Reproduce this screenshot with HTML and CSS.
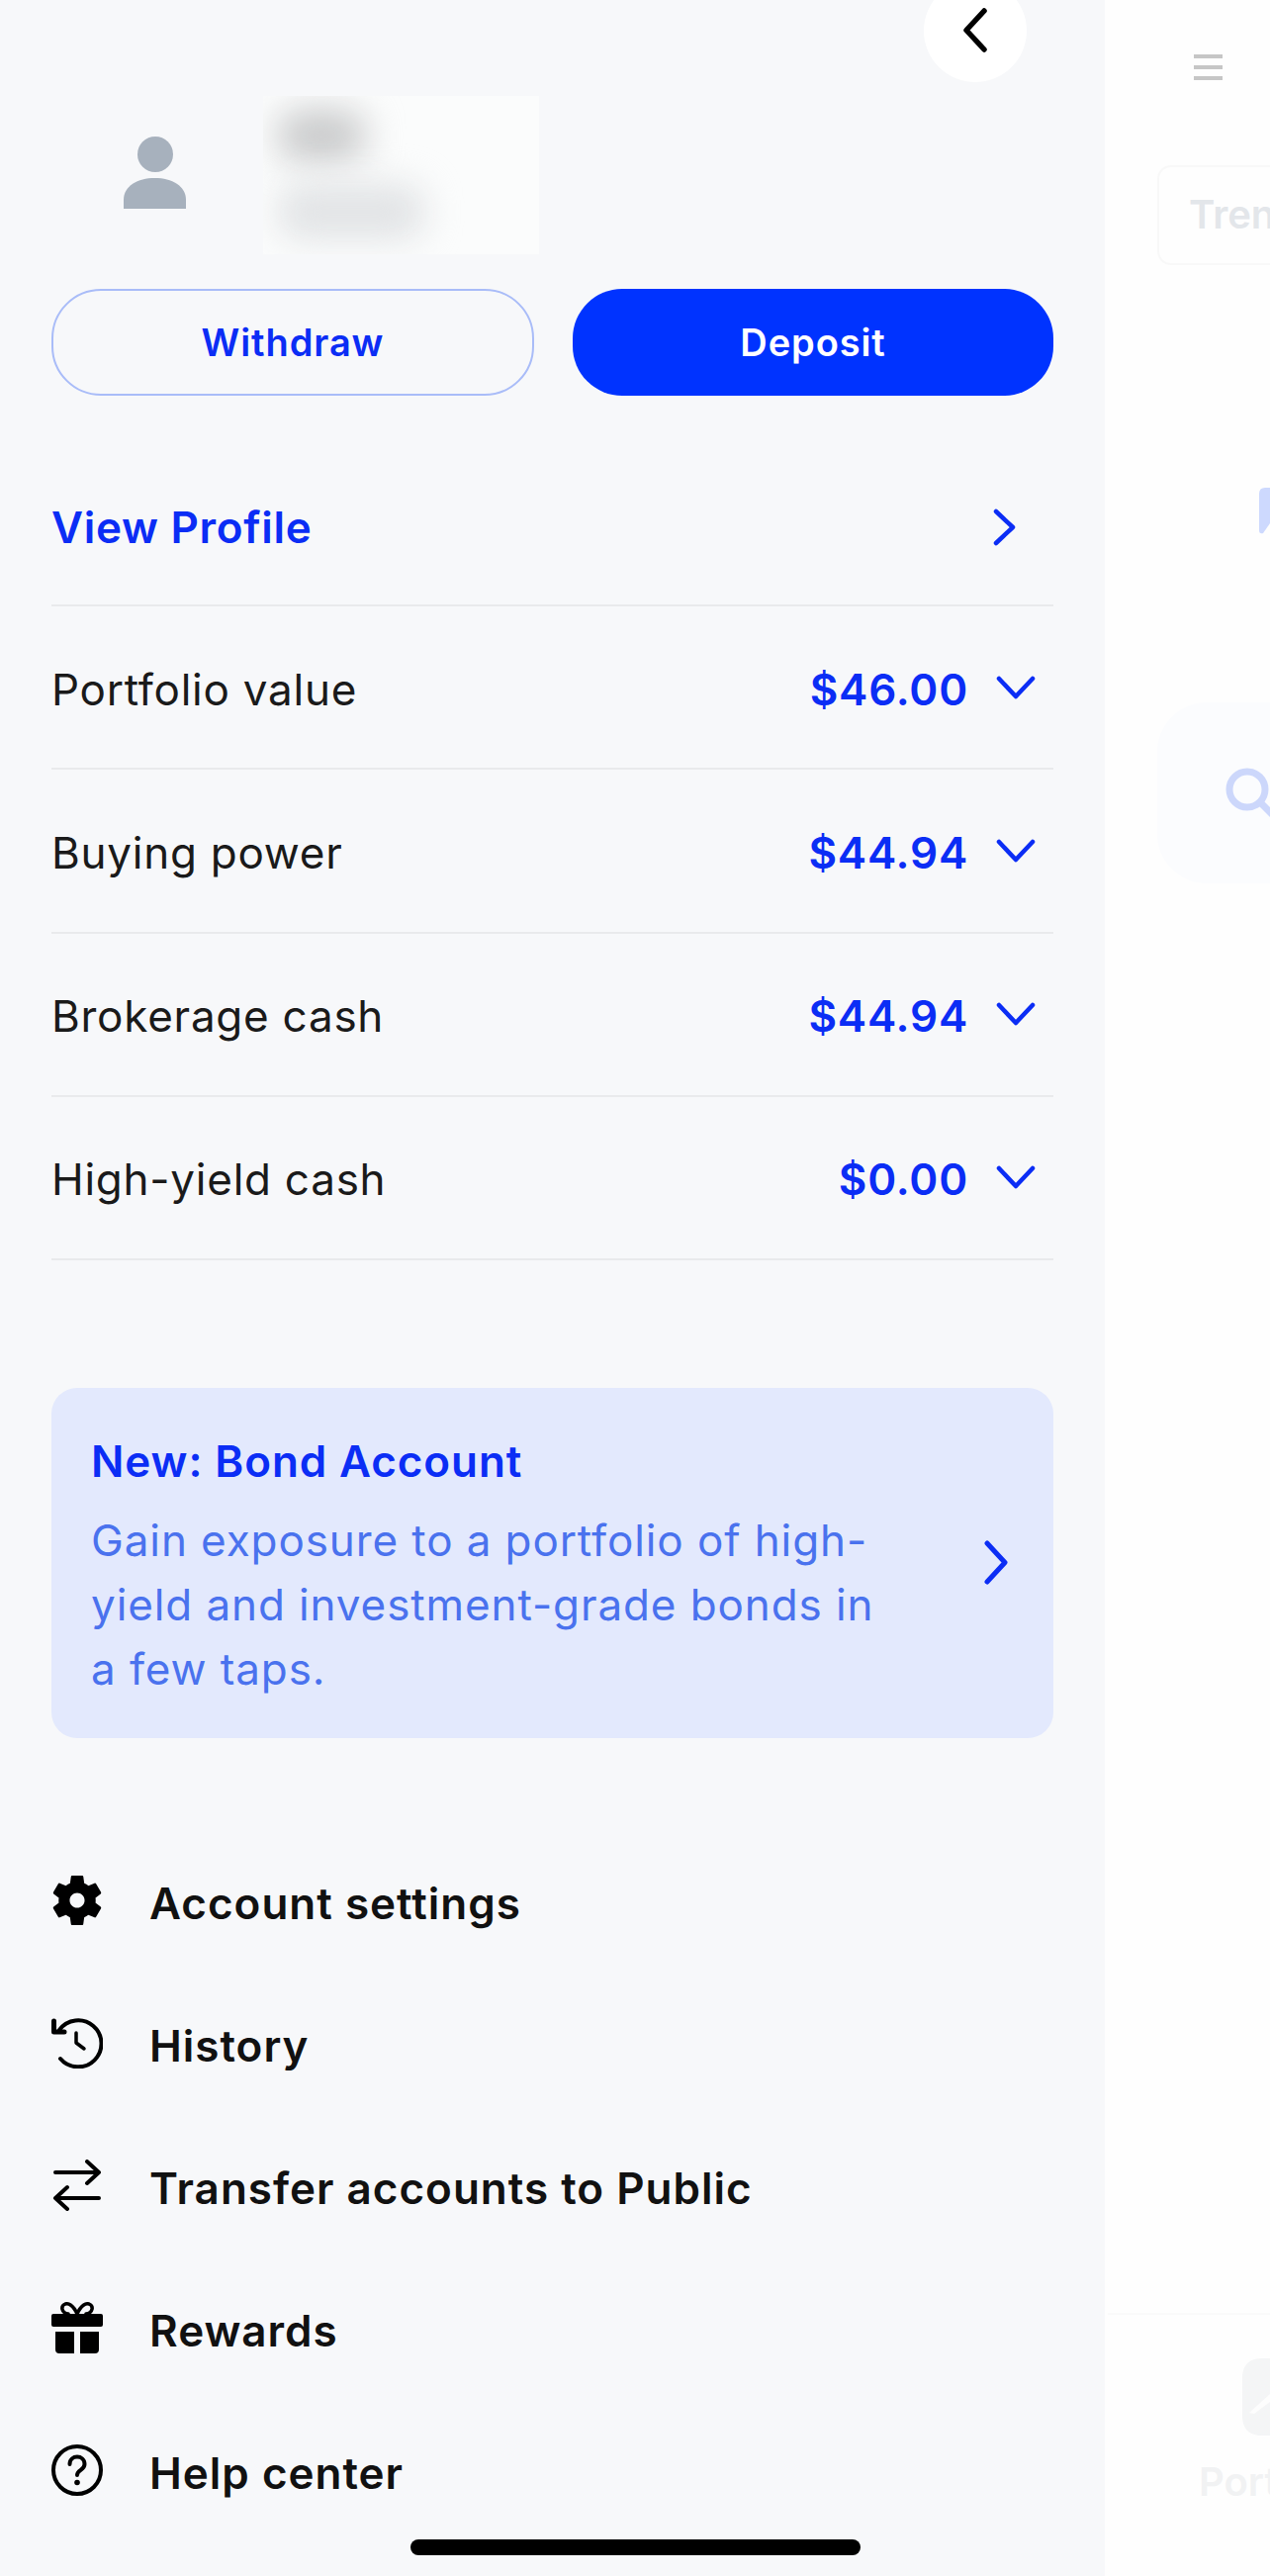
FILE: index.html
```html
<!DOCTYPE html>
<html lang="en">
<head>
<meta charset="UTF-8">
<meta name="viewport" content="width=device-width, initial-scale=1.0">
<title>Account menu</title>
<link rel="stylesheet" href="styles.css">
</head>
<body>
<div class="screen">

  <aside class="drawer">
    <button type="button" class="back-button" aria-label="Close">
      <svg class="back-icon" viewBox="0 0 25 45"><path d="M22 3 L4 22.5 L22 42"/></svg>
    </button>

    <div class="profile">
      <svg class="avatar" viewBox="0 0 63 73">
        <ellipse cx="32" cy="18" rx="18" ry="18"/>
        <path d="M0 73 V64 C0 50 14 42 31.500 42 C49 42 63 50 63 64 V73 Z"/>
      </svg>
      <div class="name-mask">
        <div class="blur-name"></div>
        <div class="blur-email"></div>
      </div>
    </div>

    <div class="actions">
      <button type="button" class="btn btn-outline">Withdraw</button>
      <button type="button" class="btn btn-solid">Deposit</button>
    </div>

    <div class="balances">
      <div class="row row-link">
        <span class="row-title">View Profile</span>
        <svg class="chevron-right" viewBox="0 0 23 38"><path d="M3 3 L20 19 L3 35"/></svg>
      </div>
      <div class="row">
        <span class="row-label">Portfolio value</span>
        <span class="row-value">$46.00</span>
        <svg class="chevron-down" viewBox="0 0 40 24"><path d="M3 3 L20 21 L37 3"/></svg>
      </div>
      <div class="row">
        <span class="row-label">Buying power</span>
        <span class="row-value">$44.94</span>
        <svg class="chevron-down" viewBox="0 0 40 24"><path d="M3 3 L20 21 L37 3"/></svg>
      </div>
      <div class="row">
        <span class="row-label">Brokerage cash</span>
        <span class="row-value">$44.94</span>
        <svg class="chevron-down" viewBox="0 0 40 24"><path d="M3 3 L20 21 L37 3"/></svg>
      </div>
      <div class="row">
        <span class="row-label">High-yield cash</span>
        <span class="row-value">$0.00</span>
        <svg class="chevron-down" viewBox="0 0 40 24"><path d="M3 3 L20 21 L37 3"/></svg>
      </div>
    </div>

    <div class="promo">
      <div class="promo-text">
        <div class="promo-title">New: Bond Account</div>
        <p class="promo-body">Gain exposure to a portfolio of high-<br>yield and investment-grade bonds in<br>a few taps.</p>
      </div>
      <svg class="promo-chevron" viewBox="0 0 24 45"><path d="M3 3 L21 22.500 L3 42"/></svg>
    </div>

    <nav class="menu">
      <a class="menu-item">
        <svg class="menu-icon" viewBox="2.500 2 19 20"><path class="fill" fill-rule="evenodd" d="M19.140 12.940c.04-.3.06-.61.06-.94 0-.32-.02-.64-.07-.94l2.030-1.580c.18-.14.23-.41.120-.61l-1.920-3.320c-.12-.22-.37-.29-.59-.22l-2.390.96c-.5-.38-1.030-.7-1.620-.94l-.36-2.540c-.04-.24-.24-.41-.48-.41h-3.840c-.24 0-.43.17-.47.41l-.36 2.540c-.59.24-1.130.57-1.620.94l-2.390-.96c-.22-.08-.47 0-.59.22L2.740 8.870c-.12.21-.08.47.12.61l2.030 1.580c-.05.3-.09.63-.09.94s.02.64.07.94l-2.030 1.580c-.18.14-.23.41-.12.61l1.920 3.320c.12.22.37.29.59.22l2.390-.96c.5.38 1.030.7 1.620.94l.36 2.540c.05.24.24.41.48.41h3.840c.24 0 .44-.17.47-.41l.36-2.540c.59-.24 1.130-.56 1.620-.94l2.390.96c.22.08.47 0 .59-.22l1.920-3.320c.12-.22.07-.47-.12-.61l-2.010-1.580zM12 14.900c-1.600 0-2.900-1.300-2.900-2.900s1.300-2.900 2.900-2.900 2.900 1.300 2.900 2.900-1.300 2.900-2.900 2.900z"/></svg>
        <span>Account settings</span>
      </a>
      <a class="menu-item">
        <svg class="menu-icon" viewBox="0 0 52 52"><path class="line" d="M8 13 A23.500 23.500 0 1 1 9 42"/><path class="line arrow" d="M2.500 4 V15 H13"/><path class="line thin" d="M25 16 V26 L33 32"/></svg>
        <span>History</span>
      </a>
      <a class="menu-item">
        <svg class="menu-icon" viewBox="0 0 52 52"><path class="line" d="M4 13 H47 M36 2 L48 13 L36 24"/><path class="line" d="M48 39 H5 M16 28 L4 39 L16 50"/></svg>
        <span>Transfer accounts to Public</span>
      </a>
      <a class="menu-item">
        <svg class="menu-icon" viewBox="0 0 52 52"><path class="line thin" d="M26 12 C22 3 17 1 14 2 C9 4 10 11 17 12 M26 12 C30 3 35 1 38 2 C43 4 42 11 35 12"/><rect class="fill" x="0" y="12" width="52" height="13" rx="2"/><path class="fill" d="M4 30 H23 V52 H8 Q4 52 4 48 Z M29 30 H48 V48 Q48 52 44 52 H29 Z"/></svg>
        <span>Rewards</span>
      </a>
      <a class="menu-item">
        <svg class="menu-icon" viewBox="0 0 52 52"><circle class="line" cx="26" cy="26" r="24"/><path class="line" d="M18.500 20 C18.500 10 33.500 10 33.500 20 C33.500 26 26 25.500 26 31"/><circle class="fill" cx="26" cy="38.500" r="2.800"/></svg>
        <span>Help center</span>
      </a>
    </nav>
  </aside>

  <!-- page underneath the drawer, faded out -->
  <main class="behind">
    <div class="behind-top">
      <div class="burger"><i></i><i></i><i></i></div>
    </div>
    <div class="tab-pill">Tren</div>
    <svg class="blue-tile" viewBox="0 0 11 47"><path d="M0 6 Q0 0 6 0 H11 V36 L4 46 Q0 47 0 43 Z"/></svg>
    <div class="search-card">
      <svg class="search-icon" viewBox="0 0 60 60"><circle cx="22" cy="22" r="18"/><path d="M35 35 L50 50"/></svg>
    </div>
    <div class="tabbar">
      <svg class="tab-icon" viewBox="0 0 28 78"><path class="tab-icon-bg" d="M20 0 H28 V78 H20 Q0 78 0 58 V20 Q0 0 20 0 Z"/><path class="tab-icon-cut" d="M7 55 L28 36 V44 L12 56 Z"/></svg>
      <div class="tab-label">Port</div>
    </div>
  </main>

  <div class="home-indicator"></div>
</div>
</body>
</html>
```

FILE: styles.css
```css
* {
  box-sizing: border-box;
}

body {
  margin: 0;
  font-family: 'Inter', 'Liberation Sans', sans-serif;
  background-color: #fefefe;
}

.screen {
  position: relative;
  display: flex;
  width: 1284px;
  height: 2604px;
  overflow: hidden;
}

/* drawer */
.drawer {
  position: relative;
  flex: 0 0 1117px;
  padding: 97px 52px 0 52px;
  background-color: #f7f8fa;
}

.back-button {
  position: absolute;
  top: -21px;
  left: 934px;
  display: flex;
  align-items: center;
  justify-content: center;
  width: 104px;
  height: 104px;
  padding: 0 2px 0 0;
  border: none;
  border-radius: 50%;
  background-color: #fff;
}

.back-icon {
  width: 25px;
  height: 45px;
  margin-top: -1px;
  fill: none;
  stroke: #000;
  stroke-width: 5.5;
  stroke-linecap: round;
  stroke-linejoin: round;
}

.profile {
  display: flex;
  align-items: flex-start;
  height: 160px;
  padding-left: 73px;
}

.avatar {
  width: 63px;
  height: 73px;
  margin-top: 41px;
  fill: #a7b1bd;
}

.name-mask {
  width: 279px;
  height: 160px;
  margin-left: 78px;
  padding: 14px 0 0 14px;
  overflow: hidden;
  background-color: #fbfcfc;
}

.blur-name {
  width: 90px;
  height: 52px;
  border-radius: 24px;
  background-color: #c8c9ca;
  filter: blur(18px);
}

.blur-email {
  width: 150px;
  height: 58px;
  margin-top: 22px;
  border-radius: 24px;
  background-color: #e2e4e6;
  filter: blur(17px);
}

.actions {
  display: grid;
  grid-template-columns: 488px 486px;
  gap: 39px;
  margin-top: 35px;
}

.btn {
  height: 108px;
  border-radius: 50px;
  font-family: inherit;
  font-size: 38px;
  font-weight: 600;
  letter-spacing: 0.9px;
}

.btn-outline {
  border: 2px solid #a9bcf8;
  background-color: transparent;
  color: #0b2df5;
}

.btn-solid {
  border: none;
  background-color: #0033ff;
  color: #fff;
}

/* balances */
.balances {
  margin-top: 48px;
}

.row {
  display: flex;
  align-items: center;
  height: 165.200px;
  padding: 4px 18px 0 0;
  border-bottom: 2px solid #e9eaec;
}

.row-link {
  padding: 6px 38px 0 0;
}

.row-title {
  flex: 1;
  color: #0b2df5;
  font-size: 44px;
  font-weight: 600;
  letter-spacing: 0.7px;
}

.row-label {
  flex: 1;
  color: #1a1a1a;
  font-size: 44px;
  font-weight: 400;
  letter-spacing: 0.75px;
}

.row-value {
  margin-right: 28px;
  color: #0b2df5;
  font-size: 44px;
  font-weight: 600;
  letter-spacing: 0.8px;
}

.chevron-right,
.chevron-down,
.promo-chevron {
  flex: none;
  fill: none;
  stroke: #0b2df5;
  stroke-width: 4.500;
  stroke-linecap: round;
  stroke-linejoin: round;
}

.chevron-right {
  width: 23px;
  height: 38px;
}

.chevron-down {
  width: 40px;
  height: 24px;
  margin-top: -4px;
}

/* bond promo */
.promo {
  display: flex;
  align-items: center;
  justify-content: space-between;
  height: 354px;
  margin-top: 129px;
  padding: 0 46px 0 40px;
  border-radius: 26px;
  background-color: #e3e9fd;
}

.promo-text {
  padding-top: 11px;
}

.promo-title {
  color: #0b2df5;
  font-size: 44px;
  font-weight: 600;
  line-height: 52px;
  letter-spacing: 0.9px;
}

.promo-body {
  margin: 21.500px 0 0 0;
  color: #4a72ee;
  font-size: 44px;
  line-height: 65px;
  letter-spacing: 0.9px;
}

.promo-chevron {
  width: 24px;
  height: 45px;
  stroke-width: 5;
}

/* menu */
.menu {
  margin-top: 95px;
}

.menu-item {
  display: flex;
  align-items: center;
  height: 144px;
  color: #111;
  font-size: 44px;
  font-weight: 600;
  letter-spacing: 1px;
}

.menu-icon {
  flex: none;
  width: 52px;
  height: 52px;
  margin: -6px 47px 0 0;
}

.fill {
  fill: #000;
}

.line {
  fill: none;
  stroke: #000;
  stroke-width: 4;
  stroke-linecap: round;
  stroke-linejoin: round;
}

.thin {
  stroke-width: 3.500;
}

.arrow {
  stroke-width: 5;
}

/* faded page behind */
.behind {
  position: relative;
  flex: 1;
  display: flex;
  flex-direction: column;
  padding-left: 53px;
  white-space: nowrap;
}

.behind-top {
  height: 167px;
  padding: 55px 0 0 37px;
}

.burger {
  display: flex;
  flex-direction: column;
  gap: 7px;
  width: 29px;
}

.burger i {
  height: 4px;
  background-color: #c6c6c6;
}

.tab-pill {
  width: 320px;
  height: 101px;
  padding-left: 30px;
  border: 2px solid #f8f8f8;
  border-radius: 14px;
  color: #e3e6ea;
  font-size: 40px;
  font-weight: 600;
  line-height: 96px;
}

.blue-tile {
  flex: none;
  width: 11px;
  height: 47px;
  margin: 225px 0 0 103px;
  fill: #cdd9fe;
}

.search-card {
  width: 400px;
  height: 183px;
  margin-top: 170px;
  padding: 66px 0 0 69px;
  border-radius: 50px;
  background-color: #fbfcfe;
}

.search-icon {
  display: block;
  width: 60px;
  height: 60px;
  fill: none;
  stroke: #ccd7fb;
  stroke-width: 7;
  stroke-linecap: round;
}

.tabbar {
  position: absolute;
  top: 2338px;
  left: 3px;
  width: 164px;
  height: 266px;
  padding: 44px 0 0 136px;
  overflow: hidden;
  border-top: 2px solid #fafafa;
}

.tab-icon {
  display: block;
  width: 28px;
  height: 78px;
}

.tab-icon-bg {
  fill: #f4f5f6;
}

.tab-icon-cut {
  fill: #fdfdfd;
}

.tab-label {
  margin: 22px 0 0 -44px;
  color: #f1f2f3;
  font-size: 40px;
  font-weight: 600;
}

.home-indicator {
  position: absolute;
  top: 2567px;
  left: 415px;
  width: 455px;
  height: 16px;
  border-radius: 8px;
  background-color: #000;
}
```
